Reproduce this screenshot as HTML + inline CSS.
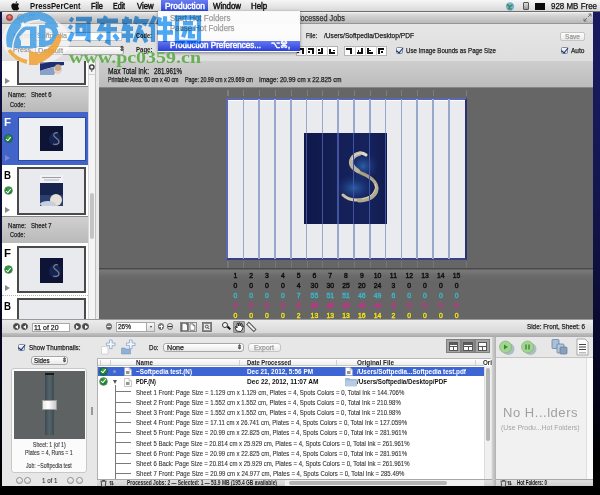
<!DOCTYPE html><html><head><meta charset="utf-8">
<style>
*{margin:0;padding:0;box-sizing:border-box}
html,body{width:600px;height:495px;overflow:hidden;background:#000;font-family:"Liberation Sans",sans-serif;color:#000}
.a{position:absolute}
.t{position:absolute;white-space:nowrap;line-height:1;transform-origin:0 50%;-webkit-text-stroke:0.25px currentColor}
.b{font-weight:bold;-webkit-text-stroke:0}
.m{-webkit-text-stroke:0.45px currentColor}
#desk{left:0;top:0;width:600px;height:486px;background:linear-gradient(#191b5e 0,#16185a 120px,#121448 220px,#0a0a30 320px,#04041a 400px,#000 460px)}
#menubar{left:0;top:0;width:600px;height:12px;background:linear-gradient(#f6f6f6,#d9d9d9);border-bottom:1px solid #6e6e6e}
#win{left:2px;top:12px;width:591px;height:474px;background:#e4e4e4}
.chk{position:absolute;width:7px;height:7px;border:1px solid #7a8aa0;border-radius:1.5px;background:linear-gradient(#fafcff,#c4d4e6)}
.chk::after{content:"";position:absolute;left:1.3px;top:-2px;width:2.5px;height:5.5px;border-right:1.6px solid #1a2c66;border-bottom:1.6px solid #1a2c66;transform:rotate(38deg)}
.btnw{position:absolute;background:linear-gradient(#fff,#eaeaea);border:1px solid #a8a8a8;border-radius:2px}
.gc{position:absolute;width:7px;height:7px;border-radius:50%;background:radial-gradient(circle at 50% 35%,#3aa848,#0a5e1a);box-shadow:0 0 0 .5px #084a14}
.gc::after{content:"";position:absolute;left:2.2px;top:0.8px;width:2px;height:3.6px;border-right:1.3px solid #fff;border-bottom:1.3px solid #fff;transform:rotate(40deg)}
.tri{position:absolute;width:0;height:0;border-left:5px solid #8a8a8a;border-top:3px solid transparent;border-bottom:3px solid transparent}
.frm{position:absolute;border:2px solid #4a4a4a;background:#e8eaee}
.hdr{position:absolute;background:linear-gradient(#d0d0d0,#b9b9b9);border-top:1px solid #8a8a8a}
.circ{position:absolute;width:8px;height:8px;border-radius:50%;border:1px solid #8a8a8a;background:linear-gradient(#fafafa,#d0d0d0)}
.row{position:absolute;left:97px;width:387px;height:10px}
</style></head><body>
<div class="a" id="desk"></div>
<div class="a" style="left:0;top:486px;width:600px;height:9px;background:#000"></div>
<div class="a" style="left:0;top:12px;width:2px;height:474px;background:linear-gradient(#101244,#0c0e38 40%,#06061e 70%,#000)"></div>

<!-- ============ WINDOW ============ -->
<div class="a" id="win"></div>
<!-- title bar -->
<div class="a" style="left:2px;top:11.5px;width:591px;height:12.5px;background:linear-gradient(#e4e4e4,#d2d2d2 30%,#b9b9b9);border-bottom:1px solid #959595;border-top:1px solid #f0f0f0;border-radius:3px 3px 0 0"></div>
<div class="a" style="left:6px;top:14px;width:7px;height:7px;border-radius:50%;background:radial-gradient(circle at 50% 35%,#f08a8a,#c02020);border:1px solid #8a3030"></div>
<div class="a" style="left:17px;top:14px;width:7px;height:7px;border-radius:50%;background:linear-gradient(#d8d8d8,#9a9a9a);border:1px solid #888"></div>
<div class="a" style="left:28px;top:14px;width:7px;height:7px;border-radius:50%;background:linear-gradient(#d8d8d8,#9a9a9a);border:1px solid #888"></div>
<span class="t" style="left: 298px; top: 14px; font-size: 8.5px; color: rgb(51, 51, 51); --w: 47; transform: scaleX(0.8575);">rocessed Jobs</span>
<svg class="a" style="left:583px;top:13px" width="9" height="9" viewBox="0 0 9 9"><path d="M1 8 L4 5 M5 4 L8 1 M5.5 1 H8 V3.5 M1 5.5 V8 H3.5" fill="none" stroke="#6a6a6a" stroke-width=".9"></path></svg>

<!-- toolbar -->
<div class="a" style="left:2px;top:24px;width:591px;height:38px;background:linear-gradient(#e6e6e6,#dedede);border-bottom:1px solid #8e8e8e"></div>
<span class="t" style="left: 13px; top: 32px; font-size: 7.5px; color: rgb(51, 51, 51); --w: 20; transform: scaleX(0.9052);">Name:</span>
<div class="a" style="left:35px;top:31.5px;width:87px;height:9px;background:#fff;border:1px solid #c4c4c4"></div>
<span class="t" style="left: 37px; top: 32px; font-size: 7.5px; color: rgb(68, 68, 68); --w: 30; transform: scaleX(0.9463);">Softpedia</span>
<span class="t b" style="left: 135.5px; top: 32px; font-size: 7.5px; color: rgb(34, 34, 34); --w: 16; transform: scaleX(0.7529);">Code:</span>
<span class="t" style="left: 13px; top: 46px; font-size: 7.5px; color: rgb(51, 51, 51); --w: 20; transform: scaleX(0.9405);">Press:</span>
<div class="btnw" style="left:35px;top:46px;width:89px;height:9px"></div>
<span class="t" style="left: 38px; top: 46.5px; font-size: 7.5px; color: rgb(51, 51, 51); --w: 25; letter-spacing: 0.206px;">Default</span>
<span class="t" style="left:119px;top:46px;font-size:6.5px;color:#333">⇕</span>
<span class="t b" style="left: 136px; top: 46px; font-size: 7.5px; color: rgb(34, 34, 34); --w: 16.5; transform: scaleX(0.8073);">Page:</span>
<span class="t" style="left: 305.5px; top: 32px; font-size: 7.5px; color: rgb(34, 34, 34); --w: 11; transform: scaleX(0.7762);">File:</span>
<span class="t" style="left: 323.5px; top: 32px; font-size: 7.5px; color: rgb(34, 34, 34); --w: 90; transform: scaleX(0.8811);">/Users/Softpedia/Desktop/PDF</span>
<div class="a" style="left:295.5px;top:45.5px;width:42px;height:10px;background:#fff;border:1px solid #b4b4b4"></div>
<div class="a" style="left:344px;top:45.5px;width:42.6px;height:10px;background:#fff;border:1px solid #b4b4b4"></div>
<div class="a" style="left:306px;top:45.5px;width:1px;height:10px;background:#c8c8c8"></div>
<div class="a" style="left:316.3px;top:45.5px;width:1px;height:10px;background:#c8c8c8"></div>
<div class="a" style="left:326.5px;top:45.5px;width:1px;height:10px;background:#c8c8c8"></div>
<div class="a" style="left:354.7px;top:45.5px;width:1px;height:10px;background:#c8c8c8"></div>
<div class="a" style="left:365px;top:45.5px;width:1px;height:10px;background:#c8c8c8"></div>
<div class="a" style="left:375.5px;top:45.5px;width:1px;height:10px;background:#c8c8c8"></div>
<div class="a" style="left:297.5px;top:48.0px;width:6px;height:2px;background:#111"></div>
<div class="a" style="left:301.5px;top:48.0px;width:2px;height:6px;background:#111"></div>
<div class="a" style="left:297.0px;top:50.5px;width:2px;height:2px;background:#111"></div>
<div class="a" style="left:308.0px;top:48.0px;width:6px;height:2px;background:#111"></div>
<div class="a" style="left:312.0px;top:48.0px;width:2px;height:6px;background:#111"></div>
<div class="a" style="left:307.5px;top:50.5px;width:2px;height:2px;background:#111"></div>
<div class="a" style="left:321.3px;top:48.0px;width:2px;height:6px;background:#111"></div>
<div class="a" style="left:317.8px;top:52.0px;width:5.5px;height:2px;background:#111"></div>
<div class="a" style="left:317.8px;top:48.5px;width:2px;height:2px;background:#111"></div>
<div class="a" style="left:328.5px;top:48.5px;width:2px;height:5.5px;background:#111"></div>
<div class="a" style="left:328.5px;top:52.0px;width:6px;height:2px;background:#111"></div>
<div class="a" style="left:332.5px;top:49.5px;width:2px;height:1.5px;background:#111"></div>
<div class="a" style="left:346.0px;top:48.0px;width:6px;height:2px;background:#111"></div>
<div class="a" style="left:350.0px;top:48.0px;width:2px;height:6px;background:#111"></div>
<div class="a" style="left:360.7px;top:48.0px;width:2px;height:6px;background:#111"></div>
<div class="a" style="left:356.7px;top:52.0px;width:6px;height:2px;background:#111"></div>
<div class="a" style="left:357.7px;top:49.5px;width:1.5px;height:2px;background:#111"></div>
<div class="a" style="left:367.0px;top:48.0px;width:2px;height:6px;background:#111"></div>
<div class="a" style="left:367.0px;top:52.0px;width:6px;height:2px;background:#111"></div>
<div class="a" style="left:367.0px;top:49.7px;width:4px;height:1.5px;background:#111"></div>
<div class="a" style="left:377.5px;top:48.0px;width:6px;height:2px;background:#111"></div>
<div class="a" style="left:377.5px;top:48.0px;width:2px;height:6px;background:#111"></div>
<div class="a" style="left:381.0px;top:51.0px;width:2px;height:2px;background:#111"></div>
<div class="chk" style="left:395.5px;top:46.5px"></div>
<span class="t" style="left: 405.5px; top: 46.5px; font-size: 7.5px; color: rgb(34, 34, 34); --w: 90; transform: scaleX(0.8176);">Use Image Bounds as Page Size</span>
<div class="btnw" style="left:560px;top:32px;width:25px;height:9px;border-color:#c4c4c4"></div>
<span class="t" style="left: 565px; top: 32.5px; font-size: 7.5px; color: rgb(153, 153, 153); --w: 15; transform: scaleX(0.8767);">Save</span>
<div class="chk" style="left:561px;top:47px"></div>
<span class="t" style="left: 571px; top: 47px; font-size: 7.5px; color: rgb(34, 34, 34); --w: 13.5; transform: scaleX(0.8745);">Auto</span>

<!-- sidebar -->
<div class="a" style="left:2px;top:61px;width:86px;height:258px;background:#fff"></div>
<div class="a" style="left:88px;top:61px;width:8px;height:258px;background:#f4f4f4;border-left:1px solid #d8d8d8;border-right:1px solid #c0c0c0"></div>
<div class="a" style="left:96px;top:61px;width:3px;height:258px;background:#e9e9e9"></div>
<div class="a" style="left:90px;top:193px;width:4px;height:46px;border-radius:2px;background:#c4c4c4"></div>
<svg class="a" style="left:88px;top:62px" width="8" height="13" viewBox="0 0 8 13"><circle cx="3.8" cy="5" r="2.2" fill="none" stroke="#333" stroke-width="1.3"></circle><path d="M2.8 8.5 H4.8 L3.8 10 Z" fill="#222"></path><rect x="0" y="12" width="8" height=".8" fill="#c8c8c8"></rect></svg>
<!-- first partial frame -->
<div class="frm" style="left:17px;top:61px;width:69px;height:24px;border-top:none"></div>
<svg class="a" style="left:40px;top:62px" width="24" height="13" viewBox="0 0 24 13"><rect width="24" height="13" fill="#e8ecf2"></rect><path d="M0 0 H24 V3 C16 4 8 6 0 9 Z" fill="#1e3070"></path><path d="M0 9 C8 6 14 5 18 5 L14 13 H0Z" fill="#8aa0c8"></path><ellipse cx="18" cy="7.5" rx="4" ry="5" fill="#e4d4c0"></ellipse><ellipse cx="18" cy="6" rx="3.2" ry="3" fill="#c8a888"></ellipse></svg>
<div class="tri" style="left:5px;top:78px"></div>
<!-- header sheet 6 -->
<div class="hdr" style="left:2px;top:86px;width:86px;height:26px"></div>
<span class="t" style="left: 8px; top: 91px; font-size: 8px; color: rgb(34, 34, 34); --w: 18; transform: scaleX(0.7639);">Name:</span>
<span class="t" style="left: 31px; top: 91px; font-size: 8px; color: rgb(34, 34, 34); --w: 20.5; transform: scaleX(0.7433);">Sheet 6</span>
<span class="t" style="left: 10px; top: 100.5px; font-size: 8px; color: rgb(34, 34, 34); --w: 15; transform: scaleX(0.7023);">Code:</span>
<!-- selected F row -->
<div class="a" style="left:2px;top:112px;width:86px;height:53px;background:#4264c8"></div>
<span class="t b" style="left: 4px; top: 118px; font-size: 10px; color: rgb(255, 255, 255); --w: 7; transform: scaleX(1.1458);">F</span>
<div class="gc" style="left:4.5px;top:135px"></div>
<div class="tri" style="left:5px;top:155px;border-left-color:#7a8ad0"></div>
<div class="frm" style="left:18px;top:116.5px;width:68px;height:44.5px;border-color:#2c48a8;border-width:1px;background:#eeeff3"></div>
<svg class="a" style="left:40px;top:126px" width="23" height="25" viewBox="0 0 23 25"><rect width="23" height="25" fill="#0e1436"></rect><ellipse cx="15" cy="13" rx="6" ry="7" fill="#22408a" opacity=".35"></ellipse><path d="M18 7 C15 6 13 8 14 10 C15 12 19 13 19 16 C19 18 16 19 13 18" fill="none" stroke="#9a9a98" stroke-width="1.2" opacity=".8"></path></svg>
<!-- B row -->
<span class="t b" style="left: 4px; top: 171px; font-size: 10px; color: rgb(0, 0, 0); --w: 7; transform: scaleX(0.9676);">B</span>
<div class="gc" style="left:4.5px;top:187px"></div>
<div class="tri" style="left:5px;top:207px"></div>
<div class="frm" style="left:17px;top:167px;width:69px;height:48px"></div>
<svg class="a" style="left:40px;top:175px" width="23" height="31" viewBox="0 0 23 31"><rect width="23" height="31" fill="#f2f2f4"></rect><rect x="2" y="2" width="19" height="1" fill="#9a9aa8"></rect><rect x="4" y="4.5" width="15" height="1" fill="#b4b4c0"></rect><rect y="8" width="23" height="23" fill="#18244e"></rect><rect y="20" width="23" height="11" fill="#2c4070"></rect><ellipse cx="16" cy="25" rx="6" ry="6" fill="#e8e0d8"></ellipse><ellipse cx="8" cy="29" rx="8" ry="3" fill="#c8d0e0"></ellipse></svg>
<!-- header sheet 7 -->
<div class="hdr" style="left:2px;top:216px;width:86px;height:27px"></div>
<span class="t" style="left: 8px; top: 221.5px; font-size: 8px; color: rgb(34, 34, 34); --w: 18; transform: scaleX(0.7639);">Name:</span>
<span class="t" style="left: 31px; top: 221.5px; font-size: 8px; color: rgb(34, 34, 34); --w: 20.5; transform: scaleX(0.7433);">Sheet 7</span>
<span class="t" style="left: 10px; top: 230.5px; font-size: 8px; color: rgb(34, 34, 34); --w: 15; transform: scaleX(0.7023);">Code:</span>
<!-- F row 2 -->
<span class="t b" style="left: 4px; top: 249px; font-size: 10px; color: rgb(0, 0, 0); --w: 7; transform: scaleX(1.1458);">F</span>
<div class="gc" style="left:4.5px;top:266px"></div>
<div class="tri" style="left:5px;top:285px"></div>
<div class="frm" style="left:17px;top:246px;width:69px;height:47px"></div>
<svg class="a" style="left:40px;top:258px" width="23" height="25" viewBox="0 0 23 25"><rect width="23" height="25" fill="#0e1436"></rect><ellipse cx="15" cy="13" rx="6" ry="7" fill="#22408a" opacity=".35"></ellipse><path d="M18 7 C15 6 13 8 14 10 C15 12 19 13 19 16 C19 18 16 19 13 18" fill="none" stroke="#9a9a98" stroke-width="1.2" opacity=".8"></path></svg>
<div class="a" style="left:2px;top:294.5px;width:86px;height:2px;border-top:1.5px dotted #b4b4b4"></div>
<!-- B row 2 -->
<span class="t b" style="left: 4px; top: 302px; font-size: 10px; color: rgb(0, 0, 0); --w: 7; transform: scaleX(0.9676);">B</span>
<div class="frm" style="left:17px;top:298px;width:69px;height:30px"></div>

<!-- preview info strip -->
<div class="a" style="left:99px;top:61px;width:494px;height:27px;background:linear-gradient(#cecece,#bcbcbc);border-bottom:1px solid #858585"></div>
<span class="t" style="left: 108px; top: 67px; font-size: 8.5px; color: rgb(17, 17, 17); --w: 41; transform: scaleX(0.784);">Max Total Ink:</span>
<span class="t" style="left: 154px; top: 67px; font-size: 8.5px; color: rgb(17, 17, 17); --w: 28; transform: scaleX(0.7311);">281.961%</span>
<span class="t" style="left: 108px; top: 77px; font-size: 6.5px; color: rgb(34, 34, 34); --w: 70.5; transform: scaleX(0.813);">Printable Area: 60 cm x 40 cm</span>
<span class="t" style="left: 185px; top: 77px; font-size: 6.5px; color: rgb(34, 34, 34); --w: 68; transform: scaleX(0.8218);">Page: 20.99 cm x 29.669 cm</span>
<span class="t" style="left: 259px; top: 77px; font-size: 6.5px; color: rgb(34, 34, 34); --w: 82.5; transform: scaleX(0.9633);">Image: 20.99 cm x 22.825 cm</span>

<!-- canvas -->
<div class="a" style="left:99px;top:88px;width:494px;height:181px;background:#666"></div>
<div class="a" style="left:99px;top:268px;width:494px;height:51px;background:linear-gradient(#4a4a4a 0,#4a4a4a 1px,#7a7a7a 2px,#6a6a6a 8px,#666 14px)"></div>
<div class="a" style="left:226.5px;top:90px;width:1px;height:6px;background:#7e7e7e"></div>
<div class="a" style="left:226.5px;top:261px;width:1px;height:7px;background:#767676"></div>
<div class="a" style="left:227.6px;top:90px;width:1px;height:6px;background:#7e7e7e"></div>
<div class="a" style="left:227.6px;top:261px;width:1px;height:7px;background:#767676"></div>
<div class="a" style="left:243.4px;top:90px;width:1px;height:6px;background:#7e7e7e"></div>
<div class="a" style="left:243.4px;top:261px;width:1px;height:7px;background:#767676"></div>
<div class="a" style="left:259.2px;top:90px;width:1px;height:6px;background:#7e7e7e"></div>
<div class="a" style="left:259.2px;top:261px;width:1px;height:7px;background:#767676"></div>
<div class="a" style="left:275.0px;top:90px;width:1px;height:6px;background:#7e7e7e"></div>
<div class="a" style="left:275.0px;top:261px;width:1px;height:7px;background:#767676"></div>
<div class="a" style="left:290.8px;top:90px;width:1px;height:6px;background:#7e7e7e"></div>
<div class="a" style="left:290.8px;top:261px;width:1px;height:7px;background:#767676"></div>
<div class="a" style="left:306.6px;top:90px;width:1px;height:6px;background:#7e7e7e"></div>
<div class="a" style="left:306.6px;top:261px;width:1px;height:7px;background:#767676"></div>
<div class="a" style="left:322.4px;top:90px;width:1px;height:6px;background:#7e7e7e"></div>
<div class="a" style="left:322.4px;top:261px;width:1px;height:7px;background:#767676"></div>
<div class="a" style="left:338.2px;top:90px;width:1px;height:6px;background:#7e7e7e"></div>
<div class="a" style="left:338.2px;top:261px;width:1px;height:7px;background:#767676"></div>
<div class="a" style="left:354.0px;top:90px;width:1px;height:6px;background:#7e7e7e"></div>
<div class="a" style="left:354.0px;top:261px;width:1px;height:7px;background:#767676"></div>
<div class="a" style="left:369.8px;top:90px;width:1px;height:6px;background:#7e7e7e"></div>
<div class="a" style="left:369.8px;top:261px;width:1px;height:7px;background:#767676"></div>
<div class="a" style="left:385.6px;top:90px;width:1px;height:6px;background:#7e7e7e"></div>
<div class="a" style="left:385.6px;top:261px;width:1px;height:7px;background:#767676"></div>
<div class="a" style="left:401.4px;top:90px;width:1px;height:6px;background:#7e7e7e"></div>
<div class="a" style="left:401.4px;top:261px;width:1px;height:7px;background:#767676"></div>
<div class="a" style="left:417.20000000000005px;top:90px;width:1px;height:6px;background:#7e7e7e"></div>
<div class="a" style="left:417.20000000000005px;top:261px;width:1px;height:7px;background:#767676"></div>
<div class="a" style="left:433.0px;top:90px;width:1px;height:6px;background:#7e7e7e"></div>
<div class="a" style="left:433.0px;top:261px;width:1px;height:7px;background:#767676"></div>
<div class="a" style="left:465.5px;top:90px;width:1px;height:6px;background:#7e7e7e"></div>
<div class="a" style="left:465.5px;top:261px;width:1px;height:7px;background:#767676"></div>
<div class="a" style="left:225.8px;top:97.8px;width:241.2px;height:162px;background:#eaebef;border:2px solid #5868b4;border-right-color:#2a3070;border-bottom-color:#3a4088"></div>
<div class="a" style="left:227.8px;top:99.8px;width:237px;height:1.5px;background:#fff"></div>
<div class="a" style="left:242.5px;top:99px;width:1.8px;height:160px;background:#98a8cc"></div>
<div class="a" style="left:258.3px;top:99px;width:1.8px;height:160px;background:#98a8cc"></div>
<div class="a" style="left:274.1px;top:99px;width:1.8px;height:160px;background:#98a8cc"></div>
<div class="a" style="left:289.90000000000003px;top:99px;width:1.8px;height:160px;background:#98a8cc"></div>
<div class="a" style="left:305.70000000000005px;top:99px;width:1.8px;height:160px;background:#98a8cc"></div>
<div class="a" style="left:321.5px;top:99px;width:1.8px;height:160px;background:#98a8cc"></div>
<div class="a" style="left:337.30000000000007px;top:99px;width:1.8px;height:160px;background:#98a8cc"></div>
<div class="a" style="left:353.1px;top:99px;width:1.8px;height:160px;background:#98a8cc"></div>
<div class="a" style="left:368.90000000000003px;top:99px;width:1.8px;height:160px;background:#98a8cc"></div>
<div class="a" style="left:384.70000000000005px;top:99px;width:1.8px;height:160px;background:#98a8cc"></div>
<div class="a" style="left:400.5px;top:99px;width:1.8px;height:160px;background:#98a8cc"></div>
<div class="a" style="left:416.30000000000007px;top:99px;width:1.8px;height:160px;background:#98a8cc"></div>
<div class="a" style="left:432.1px;top:99px;width:1.8px;height:160px;background:#98a8cc"></div>
<div class="a" style="left:447.90000000000003px;top:99px;width:1.8px;height:160px;background:#98a8cc"></div>
<div class="a" style="left:304px;top:133px;width:83px;height:91px;background:linear-gradient(90deg,#0f1848,#142058 50%,#15225c 75%,#121c50)"></div>
<svg class="a" style="left:304px;top:133px" width="83" height="91" viewBox="0 0 83 91">
<defs>
<radialGradient id="g1" cx="0.5" cy="0.5" r="0.5"><stop offset="0" stop-color="#3a88d8" stop-opacity=".6"></stop><stop offset="1" stop-color="#1a3a90" stop-opacity="0"></stop></radialGradient>
<linearGradient id="met" x1="0" y1="0" x2="0" y2="1"><stop offset="0" stop-color="#e0dcd0"></stop><stop offset=".45" stop-color="#a49c84"></stop><stop offset="1" stop-color="#d0c8b0"></stop></linearGradient>
</defs>
<ellipse cx="59" cy="33" rx="16" ry="15" fill="url(#g1)"></ellipse>
<ellipse cx="50" cy="55" rx="20" ry="14" fill="url(#g1)"></ellipse>
<path d="M62 22 C57 18 50 20 47 27 C45 33 50 37 57 40 C65 43 72 47 73 55 C73 62 66 66 56 67 C49 67.5 43 66 39 62" fill="none" stroke="#4a4030" stroke-width="3.6" stroke-linecap="round" opacity=".6"></path>
<path d="M62 22 C57 18 50 20 47 27 C45 33 50 37 57 40 C65 43 72 47 73 55 C73 62 66 66 56 67 C49 67.5 43 66 39 62" fill="none" stroke="url(#met)" stroke-width="3" stroke-linecap="round"></path>
<path d="M56 20.5 C50 22 47 25 47.5 30 C48 34 51 36 54 38" fill="none" stroke="#bab4a0" stroke-width="4.2" stroke-linecap="round"></path><path d="M58 20 C52 20 49 23 48 27" fill="none" stroke="#eee8d8" stroke-width="1"></path><path d="M72 58 C70 64 64 67 55 67.5" fill="none" stroke="#b0a890" stroke-width="4" stroke-linecap="round"></path>
<path d="M71 51 C73 58 68 64 58 66" fill="none" stroke="#e0d8b8" stroke-width=".9"></path>
</svg>
<div class="a" style="left:305.8px;top:133px;width:1.2px;height:91px;background:#4254a0"></div>
<div class="a" style="left:321.59999999999997px;top:133px;width:1.2px;height:91px;background:#4254a0"></div>
<div class="a" style="left:337.40000000000003px;top:133px;width:1.2px;height:91px;background:#4254a0"></div>
<div class="a" style="left:353.2px;top:133px;width:1.2px;height:91px;background:#4254a0"></div>
<div class="a" style="left:369.0px;top:133px;width:1.2px;height:91px;background:#4254a0"></div>
<div class="a" style="left:384.8px;top:133px;width:1.2px;height:91px;background:#4254a0"></div>
<span class="t m" style="left:225.4px;width:20px;text-align:center;top:273.2px;font-size:6.8px;color:#111;text-shadow:none">1</span>
<span class="t m" style="left:241.20000000000002px;width:20px;text-align:center;top:273.2px;font-size:6.8px;color:#111;text-shadow:none">2</span>
<span class="t m" style="left:257.0px;width:20px;text-align:center;top:273.2px;font-size:6.8px;color:#111;text-shadow:none">3</span>
<span class="t m" style="left:272.8px;width:20px;text-align:center;top:273.2px;font-size:6.8px;color:#111;text-shadow:none">4</span>
<span class="t m" style="left:288.6px;width:20px;text-align:center;top:273.2px;font-size:6.8px;color:#111;text-shadow:none">5</span>
<span class="t m" style="left:304.4px;width:20px;text-align:center;top:273.2px;font-size:6.8px;color:#111;text-shadow:none">6</span>
<span class="t m" style="left:320.20000000000005px;width:20px;text-align:center;top:273.2px;font-size:6.8px;color:#111;text-shadow:none">7</span>
<span class="t m" style="left:336.0px;width:20px;text-align:center;top:273.2px;font-size:6.8px;color:#111;text-shadow:none">8</span>
<span class="t m" style="left:351.8px;width:20px;text-align:center;top:273.2px;font-size:6.8px;color:#111;text-shadow:none">9</span>
<span class="t m" style="left:367.6px;width:20px;text-align:center;top:273.2px;font-size:6.8px;color:#111;text-shadow:none">10</span>
<span class="t m" style="left:383.4px;width:20px;text-align:center;top:273.2px;font-size:6.8px;color:#111;text-shadow:none">11</span>
<span class="t m" style="left:399.20000000000005px;width:20px;text-align:center;top:273.2px;font-size:6.8px;color:#111;text-shadow:none">12</span>
<span class="t m" style="left:415.0px;width:20px;text-align:center;top:273.2px;font-size:6.8px;color:#111;text-shadow:none">13</span>
<span class="t m" style="left:430.8px;width:20px;text-align:center;top:273.2px;font-size:6.8px;color:#111;text-shadow:none">14</span>
<span class="t m" style="left:446.6px;width:20px;text-align:center;top:273.2px;font-size:6.8px;color:#111;text-shadow:none">15</span>
<span class="t m" style="left:225.4px;width:20px;text-align:center;top:282.5px;font-size:6.8px;color:#111;text-shadow:none">0</span>
<span class="t m" style="left:241.20000000000002px;width:20px;text-align:center;top:282.5px;font-size:6.8px;color:#111;text-shadow:none">0</span>
<span class="t m" style="left:257.0px;width:20px;text-align:center;top:282.5px;font-size:6.8px;color:#111;text-shadow:none">0</span>
<span class="t m" style="left:272.8px;width:20px;text-align:center;top:282.5px;font-size:6.8px;color:#111;text-shadow:none">0</span>
<span class="t m" style="left:288.6px;width:20px;text-align:center;top:282.5px;font-size:6.8px;color:#111;text-shadow:none">4</span>
<span class="t m" style="left:304.4px;width:20px;text-align:center;top:282.5px;font-size:6.8px;color:#111;text-shadow:none">30</span>
<span class="t m" style="left:320.20000000000005px;width:20px;text-align:center;top:282.5px;font-size:6.8px;color:#111;text-shadow:none">30</span>
<span class="t m" style="left:336.0px;width:20px;text-align:center;top:282.5px;font-size:6.8px;color:#111;text-shadow:none">25</span>
<span class="t m" style="left:351.8px;width:20px;text-align:center;top:282.5px;font-size:6.8px;color:#111;text-shadow:none">20</span>
<span class="t m" style="left:367.6px;width:20px;text-align:center;top:282.5px;font-size:6.8px;color:#111;text-shadow:none">24</span>
<span class="t m" style="left:383.4px;width:20px;text-align:center;top:282.5px;font-size:6.8px;color:#111;text-shadow:none">3</span>
<span class="t m" style="left:399.20000000000005px;width:20px;text-align:center;top:282.5px;font-size:6.8px;color:#111;text-shadow:none">0</span>
<span class="t m" style="left:415.0px;width:20px;text-align:center;top:282.5px;font-size:6.8px;color:#111;text-shadow:none">0</span>
<span class="t m" style="left:430.8px;width:20px;text-align:center;top:282.5px;font-size:6.8px;color:#111;text-shadow:none">0</span>
<span class="t m" style="left:446.6px;width:20px;text-align:center;top:282.5px;font-size:6.8px;color:#111;text-shadow:none">0</span>
<span class="t m" style="left:225.4px;width:20px;text-align:center;top:293.0px;font-size:6.8px;color:#3ab4c8;text-shadow:none">0</span>
<span class="t m" style="left:241.20000000000002px;width:20px;text-align:center;top:293.0px;font-size:6.8px;color:#3ab4c8;text-shadow:none">0</span>
<span class="t m" style="left:257.0px;width:20px;text-align:center;top:293.0px;font-size:6.8px;color:#3ab4c8;text-shadow:none">0</span>
<span class="t m" style="left:272.8px;width:20px;text-align:center;top:293.0px;font-size:6.8px;color:#3ab4c8;text-shadow:none">0</span>
<span class="t m" style="left:288.6px;width:20px;text-align:center;top:293.0px;font-size:6.8px;color:#3ab4c8;text-shadow:none">7</span>
<span class="t m" style="left:304.4px;width:20px;text-align:center;top:293.0px;font-size:6.8px;color:#3ab4c8;text-shadow:none">55</span>
<span class="t m" style="left:320.20000000000005px;width:20px;text-align:center;top:293.0px;font-size:6.8px;color:#3ab4c8;text-shadow:none">51</span>
<span class="t m" style="left:336.0px;width:20px;text-align:center;top:293.0px;font-size:6.8px;color:#3ab4c8;text-shadow:none">51</span>
<span class="t m" style="left:351.8px;width:20px;text-align:center;top:293.0px;font-size:6.8px;color:#3ab4c8;text-shadow:none">46</span>
<span class="t m" style="left:367.6px;width:20px;text-align:center;top:293.0px;font-size:6.8px;color:#3ab4c8;text-shadow:none">49</span>
<span class="t m" style="left:383.4px;width:20px;text-align:center;top:293.0px;font-size:6.8px;color:#3ab4c8;text-shadow:none">6</span>
<span class="t m" style="left:399.20000000000005px;width:20px;text-align:center;top:293.0px;font-size:6.8px;color:#3ab4c8;text-shadow:none">0</span>
<span class="t m" style="left:415.0px;width:20px;text-align:center;top:293.0px;font-size:6.8px;color:#3ab4c8;text-shadow:none">0</span>
<span class="t m" style="left:430.8px;width:20px;text-align:center;top:293.0px;font-size:6.8px;color:#3ab4c8;text-shadow:none">0</span>
<span class="t m" style="left:446.6px;width:20px;text-align:center;top:293.0px;font-size:6.8px;color:#3ab4c8;text-shadow:none">0</span>
<span class="t m" style="left:225.4px;width:20px;text-align:center;top:302.5px;font-size:6.8px;color:#c8308c;text-shadow:none">0</span>
<span class="t m" style="left:241.20000000000002px;width:20px;text-align:center;top:302.5px;font-size:6.8px;color:#c8308c;text-shadow:none">0</span>
<span class="t m" style="left:257.0px;width:20px;text-align:center;top:302.5px;font-size:6.8px;color:#c8308c;text-shadow:none">0</span>
<span class="t m" style="left:272.8px;width:20px;text-align:center;top:302.5px;font-size:6.8px;color:#c8308c;text-shadow:none">0</span>
<span class="t m" style="left:288.6px;width:20px;text-align:center;top:302.5px;font-size:6.8px;color:#c8308c;text-shadow:none">6</span>
<span class="t m" style="left:304.4px;width:20px;text-align:center;top:302.5px;font-size:6.8px;color:#c8308c;text-shadow:none">46</span>
<span class="t m" style="left:320.20000000000005px;width:20px;text-align:center;top:302.5px;font-size:6.8px;color:#c8308c;text-shadow:none">46</span>
<span class="t m" style="left:336.0px;width:20px;text-align:center;top:302.5px;font-size:6.8px;color:#c8308c;text-shadow:none">45</span>
<span class="t m" style="left:351.8px;width:20px;text-align:center;top:302.5px;font-size:6.8px;color:#c8308c;text-shadow:none">46</span>
<span class="t m" style="left:367.6px;width:20px;text-align:center;top:302.5px;font-size:6.8px;color:#c8308c;text-shadow:none">44</span>
<span class="t m" style="left:383.4px;width:20px;text-align:center;top:302.5px;font-size:6.8px;color:#c8308c;text-shadow:none">6</span>
<span class="t m" style="left:399.20000000000005px;width:20px;text-align:center;top:302.5px;font-size:6.8px;color:#c8308c;text-shadow:none">0</span>
<span class="t m" style="left:415.0px;width:20px;text-align:center;top:302.5px;font-size:6.8px;color:#c8308c;text-shadow:none">0</span>
<span class="t m" style="left:430.8px;width:20px;text-align:center;top:302.5px;font-size:6.8px;color:#c8308c;text-shadow:none">0</span>
<span class="t m" style="left:446.6px;width:20px;text-align:center;top:302.5px;font-size:6.8px;color:#c8308c;text-shadow:none">0</span>
<span class="t m" style="left:225.4px;width:20px;text-align:center;top:312.5px;font-size:6.8px;color:#f0e020;text-shadow:0 0 1px #333">0</span>
<span class="t m" style="left:241.20000000000002px;width:20px;text-align:center;top:312.5px;font-size:6.8px;color:#f0e020;text-shadow:0 0 1px #333">0</span>
<span class="t m" style="left:257.0px;width:20px;text-align:center;top:312.5px;font-size:6.8px;color:#f0e020;text-shadow:0 0 1px #333">0</span>
<span class="t m" style="left:272.8px;width:20px;text-align:center;top:312.5px;font-size:6.8px;color:#f0e020;text-shadow:0 0 1px #333">0</span>
<span class="t m" style="left:288.6px;width:20px;text-align:center;top:312.5px;font-size:6.8px;color:#f0e020;text-shadow:0 0 1px #333">2</span>
<span class="t m" style="left:304.4px;width:20px;text-align:center;top:312.5px;font-size:6.8px;color:#f0e020;text-shadow:0 0 1px #333">13</span>
<span class="t m" style="left:320.20000000000005px;width:20px;text-align:center;top:312.5px;font-size:6.8px;color:#f0e020;text-shadow:0 0 1px #333">13</span>
<span class="t m" style="left:336.0px;width:20px;text-align:center;top:312.5px;font-size:6.8px;color:#f0e020;text-shadow:0 0 1px #333">13</span>
<span class="t m" style="left:351.8px;width:20px;text-align:center;top:312.5px;font-size:6.8px;color:#f0e020;text-shadow:0 0 1px #333">16</span>
<span class="t m" style="left:367.6px;width:20px;text-align:center;top:312.5px;font-size:6.8px;color:#f0e020;text-shadow:0 0 1px #333">14</span>
<span class="t m" style="left:383.4px;width:20px;text-align:center;top:312.5px;font-size:6.8px;color:#f0e020;text-shadow:0 0 1px #333">2</span>
<span class="t m" style="left:399.20000000000005px;width:20px;text-align:center;top:312.5px;font-size:6.8px;color:#f0e020;text-shadow:0 0 1px #333">0</span>
<span class="t m" style="left:415.0px;width:20px;text-align:center;top:312.5px;font-size:6.8px;color:#f0e020;text-shadow:0 0 1px #333">0</span>
<span class="t m" style="left:430.8px;width:20px;text-align:center;top:312.5px;font-size:6.8px;color:#f0e020;text-shadow:0 0 1px #333">0</span>
<span class="t m" style="left:446.6px;width:20px;text-align:center;top:312.5px;font-size:6.8px;color:#f0e020;text-shadow:0 0 1px #333">0</span>

<!-- nav bar -->
<div class="a" style="left:2px;top:319px;width:591px;height:14px;background:linear-gradient(#ececec,#d8d8d8);border-top:1px solid #9a9a9a"></div>
<div class="a" style="left:12.799999999999999px;top:323.3px;width:6.8px;height:6.8px;border-radius:50%;background:#4a4a4a;border:1px solid #555"></div>
<div class="a" style="left:14.6px;top:324.7px;width:0;height:0;border-right:3px solid #fff;border-top:2px solid transparent;border-bottom:2px solid transparent"></div>
<div class="a" style="left:21.200000000000003px;top:323.3px;width:6.8px;height:6.8px;border-radius:50%;background:#4a4a4a;border:1px solid #555"></div>
<div class="a" style="left:23.0px;top:324.7px;width:0;height:0;border-right:3px solid #fff;border-top:2px solid transparent;border-bottom:2px solid transparent"></div>
<div class="a" style="left:73.89999999999999px;top:323.3px;width:6.8px;height:6.8px;border-radius:50%;background:#4a4a4a;border:1px solid #555"></div>
<div class="a" style="left:76.1px;top:324.7px;width:0;height:0;border-left:3px solid #fff;border-top:2px solid transparent;border-bottom:2px solid transparent"></div>
<div class="a" style="left:82.39999999999999px;top:323.3px;width:6.8px;height:6.8px;border-radius:50%;background:#4a4a4a;border:1px solid #555"></div>
<div class="a" style="left:84.6px;top:324.7px;width:0;height:0;border-left:3px solid #fff;border-top:2px solid transparent;border-bottom:2px solid transparent"></div>
<div class="a" style="left:31.5px;top:322.5px;width:38.5px;height:9px;background:#fff;border:1px solid #a8a8a8"></div>
<span class="t" style="left: 33.5px; top: 323.5px; font-size: 7.5px; color: rgb(34, 34, 34); --w: 24.5; transform: scaleX(0.9224);">11 of 20</span>
<div class="a" style="left:105.95px;top:323.15px;width:6.5px;height:6.5px;border-radius:50%;background:linear-gradient(#8a8a8a,#5a5a5a);border:1px solid #6e6e6e"></div>
<div class="a" style="left:107.2px;top:325.9px;width:4px;height:1px;background:#eee"></div>
<div class="a" style="left:116px;top:321.5px;width:31px;height:10px;background:#fff;border:1px solid #a8a8a8"></div>
<span class="t" style="left: 117.5px; top: 323px; font-size: 7.5px; color: rgb(34, 34, 34); --w: 13; transform: scaleX(0.8658);">26%</span>
<div class="a" style="left:147px;top:321.5px;width:8px;height:10px;background:linear-gradient(#fafafa,#dadada);border:1px solid #a8a8a8;border-left:none"></div>
<div class="a" style="left:149.5px;top:326px;width:0;height:0;border-top:2px solid #333;border-left:1.5px solid transparent;border-right:1.5px solid transparent"></div>
<div class="a" style="left:157.95px;top:323.25px;width:6.5px;height:6.5px;border-radius:50%;background:linear-gradient(#8a8a8a,#5a5a5a);border:1px solid #6e6e6e"></div>
<div class="a" style="left:159.2px;top:326px;width:4px;height:1px;background:#fff"></div><div class="a" style="left:160.7px;top:324.5px;width:1px;height:4px;background:#fff"></div>
<div class="a" style="left:166.55px;top:323.25px;width:6.5px;height:6.5px;border-radius:50%;background:linear-gradient(#f4f4f4,#c8c8c8);border:1px solid #6e6e6e"></div>
<div class="a" style="left:167.8px;top:326px;width:4px;height:1px;background:#333"></div>
<svg class="a" style="left:179.5px;top:321.5px" width="17" height="10" viewBox="0 0 17 10"><rect x="0.5" y="0.5" width="16" height="9" fill="#e8e8e8" stroke="#777" stroke-width=".8"></rect><rect x="0.8" y="0.8" width="8" height="8.4" fill="#6a6a6a"></rect><path d="M2.5 1.8 H5.5 L7 3.3 V8.3 H2.5 Z" fill="#fafafa"></path><path d="M10 1.8 H13 L14.8 3.6 V8.3 H10 Z" fill="#fff" stroke="#555" stroke-width=".7"></path><path d="M13 1.8 V3.6 H14.8" fill="none" stroke="#555" stroke-width=".6"></path></svg>
<svg class="a" style="left:202px;top:321.5px" width="10" height="10" viewBox="0 0 10 10"><rect x="0.5" y="0.5" width="9" height="9" fill="#8a8a8a" stroke="#666" stroke-width=".8"></rect><rect x="2" y="2" width="6" height="6" fill="#ececec"></rect><circle cx="4.8" cy="4.6" r="1.5" fill="none" stroke="#333" stroke-width=".8"></circle><path d="M5.8 5.6 L7.3 7.1" stroke="#333" stroke-width=".9"></path></svg>
<div class="a" style="left:221.5px;top:322px;width:6px;height:6px;border-radius:50%;border:1.2px solid #333;background:#f8f8f8"></div>
<div class="a" style="left:226.5px;top:327.3px;width:4px;height:1.6px;background:#111;transform:rotate(45deg)"></div>
<div class="a" style="left:233px;top:321px;width:11.5px;height:11.5px;background:#a8a8a8;border:1px solid #8a8a8a;border-radius:1px"></div>
<svg class="a" style="left:234px;top:322px" width="10" height="10" viewBox="0 0 10 10"><path d="M2.5 9 L1 5 L2 4.5 L3 6 L3 1.5 L4 1 L4.5 4 L5 0.8 L6 1 L6 4 L7 1.5 L8 2 L7.8 5 L8.7 3.5 L9.5 4 L8 8 L7 9.5 Z" fill="#fff" stroke="#111" stroke-width=".8"></path></svg>
<div class="a" style="left:246px;top:325px;width:11px;height:3.5px;border:1px solid #555;background:#f0f0f0;transform:rotate(45deg)"></div>
<span class="t" style="left: 527px; top: 322.5px; font-size: 7.5px; color: rgb(34, 34, 34); --w: 58; transform: scaleX(0.8431);">Side: Front, Sheet: 6</span>

<!-- splitter -->
<div class="a" style="left:2px;top:333px;width:591px;height:4px;background:linear-gradient(#c2c2c2,#a8a8a8)"></div>

<!-- lower panel -->
<div class="a" style="left:2px;top:337px;width:591px;height:149px;background:#e7e7e7"></div>
<div class="chk" style="left:18px;top:344px"></div>
<span class="t" style="left: 28.5px; top: 343.5px; font-size: 7.5px; color: rgb(34, 34, 34); --w: 51.5; transform: scaleX(0.8365);">Show Thumbnails:</span>
<div class="btnw" style="left:31px;top:356px;width:37px;height:9px;border-radius:3px"></div>
<span class="t" style="left: 34px; top: 356.5px; font-size: 7.5px; color: rgb(34, 34, 34); --w: 15.5; transform: scaleX(0.826);">Sides</span>
<span class="t" style="left:62px;top:357px;font-size:6px;color:#333">⇕</span>
<div class="a" style="left:11px;top:367.5px;width:76px;height:105px;background:#fbfbfb;border:1px solid #c8c8c8;border-radius:3px"></div>
<div class="a" style="left:14px;top:370.5px;width:71px;height:68px;background:#5f6262"></div>
<div class="a" style="left:45px;top:373px;width:8.5px;height:62px;background:linear-gradient(90deg,#3c4a52,#56646a 50%,#3c4a52)"></div>
<div class="a" style="left:45px;top:373px;width:8.5px;height:2px;background:#1a1a1a"></div>
<div class="a" style="left:41.5px;top:400px;width:15px;height:10px;background:linear-gradient(90deg,#e8e8e8,#fff 40%,#c8c8c8);border:1px solid #9a9a9a"></div>
<span class="t" style="left: 33px; top: 441.6px; font-size: 6.5px; color: rgb(51, 51, 51); -webkit-text-stroke: 0.1px rgb(51, 51, 51); --w: 32.7; transform: scaleX(0.7936);">Sheet: 1 (of 1)</span>
<span class="t" style="left: 25.3px; top: 449.6px; font-size: 6.5px; color: rgb(51, 51, 51); -webkit-text-stroke: 0.1px rgb(51, 51, 51); --w: 47.8; transform: scaleX(0.8115);">Plates = 4, Runs = 1</span>
<span class="t" style="left: 26.3px; top: 462.6px; font-size: 6.5px; color: rgb(51, 51, 51); -webkit-text-stroke: 0.1px rgb(51, 51, 51); --w: 45.8; transform: scaleX(0.7946);">Job: ~Softpedia test</span>
<div class="a" style="left:15.5px;top:476.5px;width:7px;height:7px;border-radius:50%;border:1px solid #8a8a8a;background:linear-gradient(#f8f8f8,#d4d4d4)"></div>
<div class="a" style="left:24.2px;top:476.5px;width:7px;height:7px;border-radius:50%;border:1px solid #8a8a8a;background:linear-gradient(#f8f8f8,#d4d4d4)"></div>
<div class="a" style="left:67.2px;top:476.5px;width:7px;height:7px;border-radius:50%;border:1px solid #8a8a8a;background:linear-gradient(#f8f8f8,#d4d4d4)"></div>
<div class="a" style="left:75.5px;top:476.5px;width:7px;height:7px;border-radius:50%;border:1px solid #8a8a8a;background:linear-gradient(#f8f8f8,#d4d4d4)"></div>
<span class="t" style="left: 41.5px; top: 476.5px; font-size: 7.5px; color: rgb(51, 51, 51); -webkit-text-stroke: 0.1px rgb(51, 51, 51); --w: 15.5; transform: scaleX(0.826);">1 of 1</span>
<div class="a" style="left:91px;top:407px;width:2px;height:8px;background:#999"></div>
<svg class="a" style="left:100px;top:339px" width="40" height="16" viewBox="0 0 40 16"><path d="M1.5 7.5 h4.5 l2 2 v5.5 h-6.5z" fill="#fdfdfd" stroke="#c4c4c4" stroke-width=".6"></path><path d="M9.5 1 h2.6 v3 h3 v2.6 h-3 v3 h-2.6 v-3 h-3 v-2.6 h3z" fill="#f2f5fa" stroke="#8aa4cc" stroke-width=".8"></path><path d="M21.5 9 h3.5 l1 1 h4.5 v5 h-9z" fill="#8eb0d4" stroke="#6f90b8" stroke-width=".5"></path><path d="M29.5 1 h2.6 v3 h3 v2.6 h-3 v3 h-2.6 v-3 h-3 v-2.6 h3z" fill="#f2f5fa" stroke="#8aa4cc" stroke-width=".8"></path></svg>
<span class="t" style="left: 149px; top: 343.5px; font-size: 7.5px; color: rgb(34, 34, 34); --w: 9.5; transform: scaleX(0.8139);">Do:</span>
<div class="btnw" style="left:163px;top:343px;width:80.5px;height:9px;border-radius:3px"></div>
<span class="t" style="left: 167px; top: 343.5px; font-size: 7.5px; color: rgb(34, 34, 34); --w: 17; transform: scaleX(0.9477);">None</span>
<span class="t" style="left:237px;top:344px;font-size:6px;color:#333">⇕</span>
<div class="btnw" style="left:248px;top:343px;width:33px;height:9px;border-color:#c4c4c4;border-radius:3px"></div>
<span class="t" style="left: 254px; top: 344px; font-size: 7.5px; color: rgb(154, 154, 154); --w: 20; transform: scaleX(0.9222);">Export</span>
<div class="a" style="left:446.0px;top:339px;width:14.5px;height:14px;background:#a4a4a4;border:1px solid #808080"></div>
<div class="a" style="left:448.5px;top:341.5px;width:9.5px;height:9px;background:#fafafa;border:1px solid #555"></div>
<div class="a" style="left:449.5px;top:342.5px;width:7.5px;height:2.5px;background:#5a5a5a"></div>
<div class="a" style="left:449.0px;top:345.5px;width:8.5px;height:1px;background:#555"></div>
<div class="a" style="left:453.0px;top:346px;width:1px;height:4.5px;background:#555"></div>
<div class="a" style="left:460.7px;top:339px;width:14.5px;height:14px;background:#8c8c8c;border:1px solid #808080"></div>
<div class="a" style="left:463.2px;top:341.5px;width:9.5px;height:9px;background:#fafafa;border:1px solid #555"></div>
<div class="a" style="left:464.2px;top:342.5px;width:7.5px;height:2.5px;background:#5a5a5a"></div>
<div class="a" style="left:463.7px;top:345.5px;width:8.5px;height:1px;background:#555"></div>
<div class="a" style="left:467.7px;top:346px;width:1px;height:4.5px;background:#555"></div>
<div class="a" style="left:475.4px;top:339px;width:14.5px;height:14px;background:#a4a4a4;border:1px solid #808080"></div>
<div class="a" style="left:477.9px;top:341.5px;width:9.5px;height:9px;background:#fafafa;border:1px solid #555"></div>
<div class="a" style="left:478.9px;top:342.5px;width:7.5px;height:2.5px;background:#fafafa"></div>
<div class="a" style="left:478.4px;top:345.5px;width:8.5px;height:1px;background:#555"></div>
<div class="a" style="left:482.4px;top:346px;width:1px;height:4.5px;background:#555"></div>
<div class="a" style="left:97px;top:358px;width:394px;height:121px;background:#fff;border-left:1px solid #b0b0b0;border-top:1px solid #b8b8b8"></div>
<div class="a" style="left:98px;top:359px;width:386px;height:7px;background:linear-gradient(#fff,#eee);border-bottom:1px solid #c4c4c4"></div>
<div class="a" style="left:100px;top:360px;width:1px;height:5px;background:#d0d0d0"></div>
<div class="a" style="left:109.5px;top:360px;width:1px;height:5px;background:#d0d0d0"></div>
<div class="a" style="left:239px;top:360px;width:1px;height:5px;background:#d0d0d0"></div>
<div class="a" style="left:336px;top:360px;width:1px;height:5px;background:#d0d0d0"></div>
<div class="a" style="left:474.5px;top:360px;width:1px;height:5px;background:#d0d0d0"></div>
<span class="t b" style="left: 136px; top: 358.8px; font-size: 7px; color: rgb(34, 34, 34); --w: 17; transform: scaleX(0.8911);">Name</span>
<span class="t b" style="left: 247px; top: 358.8px; font-size: 7px; color: rgb(34, 34, 34); --w: 44; transform: scaleX(0.8376);">Date Processed</span>
<span class="t b" style="left: 357px; top: 358.8px; font-size: 7px; color: rgb(34, 34, 34); --w: 37; transform: scaleX(0.9146);">Original File</span>
<span class="t b" style="left: 483px; top: 358.8px; font-size: 7px; color: rgb(34, 34, 34); --w: 9; transform: scaleX(0.8889);">Ori</span>
<div class="a" style="left:98px;top:366.5px;width:386px;height:9.5px;background:#3d66d4"></div>
<div class="gc" style="left:99.5px;top:367.5px;width:7.5px;height:7.5px"></div>
<div class="a" style="left:112.5px;top:369.5px;width:3px;height:3px;border-radius:50%;background:#8a9ac8"></div>
<svg class="a" style="left:123.5px;top:367px" width="8" height="9" viewBox="0 0 8 9"><path d="M0.5 0.5 H5 L7.5 3 V8.5 H0.5 Z" fill="#fbfbfb" stroke="#a8a8a8" stroke-width=".6"></path><path d="M5 0.5 V3 H7.5" fill="#e0e0e0" stroke="#a8a8a8" stroke-width=".5"></path><rect x="2" y="4" width="3.5" height="3" fill="#9a9490"></rect></svg>
<span class="t b" style="left: 136px; top: 367.5px; font-size: 7.5px; color: rgb(255, 255, 255); --w: 56; transform: scaleX(0.8425);">~Softpedia test.(N)</span>
<span class="t b" style="left: 247px; top: 367.5px; font-size: 7.5px; color: rgb(255, 255, 255); --w: 66; transform: scaleX(0.8509);">Dec 21, 2012, 5:56 PM</span>
<svg class="a" style="left:344.5px;top:367px" width="8" height="9" viewBox="0 0 8 9"><path d="M0.5 0.5 H5 L7.5 3 V8.5 H0.5 Z" fill="#fbfbfb" stroke="#a8a8a8" stroke-width=".6"></path><path d="M5 0.5 V3 H7.5" fill="#e0e0e0" stroke="#a8a8a8" stroke-width=".5"></path><rect x="2" y="4" width="3.5" height="3" fill="#9a9490"></rect></svg>
<span class="t b" style="left: 357px; top: 367.5px; font-size: 7.5px; color: rgb(255, 255, 255); --w: 109; transform: scaleX(0.8464);">/Users/Softpedia...Softpedia test.pdf</span>
<div class="gc" style="left:99.5px;top:377.5px;width:7.5px;height:7.5px"></div>
<div class="a" style="left:112.5px;top:380px;width:0;height:0;border-top:4px solid #555;border-left:2.5px solid transparent;border-right:2.5px solid transparent"></div>
<svg class="a" style="left:123.5px;top:377.5px" width="8" height="9" viewBox="0 0 8 9"><path d="M0.5 0.5 H5 L7.5 3 V8.5 H0.5 Z" fill="#fbfbfb" stroke="#a8a8a8" stroke-width=".6"></path><path d="M5 0.5 V3 H7.5" fill="#e0e0e0" stroke="#a8a8a8" stroke-width=".5"></path><rect x="2" y="4" width="3.5" height="3" fill="#9a9490"></rect></svg>
<span class="t b" style="left: 136px; top: 378px; font-size: 7.5px; color: rgb(17, 17, 17); --w: 20; transform: scaleX(0.7499);">PDF.(N)</span>
<span class="t b" style="left: 247px; top: 378px; font-size: 7.5px; color: rgb(17, 17, 17); --w: 71.5; transform: scaleX(0.8778);">Dec 22, 2012, 11:07 AM</span>
<svg class="a" style="left:344.5px;top:377px" width="12" height="10" viewBox="0 0 12 10"><path d="M0.5 1.5 H4.5 L5.5 2.5 H11.5 V9 H0.5 Z" fill="#9cb8d8" stroke="#7a98c0" stroke-width=".5"></path><rect x="0.5" y="3.5" width="11" height="5.5" fill="#b4cce6"></rect></svg>
<span class="t b" style="left: 357px; top: 378px; font-size: 7.5px; color: rgb(17, 17, 17); --w: 90; transform: scaleX(0.8337);">/Users/Softpedia/Desktop/PDF</span>
<div class="a" style="left:115px;top:385px;width:1px;height:94px;background:#7a7a7a"></div>
<div class="a" style="left:115px;top:391.3px;width:16px;height:1px;background:#7a7a7a"></div>
<span class="t" style="left: 135.5px; top: 389.6px; font-size: 6.7px; color: rgb(51, 51, 51); -webkit-text-stroke: 0.1px rgb(51, 51, 51); --w: 268.3; transform: scaleX(0.9014);">Sheet 1 Front:  Page Size = 1.129 cm x 1.129 cm,  Plates = 4,  Spots Colors = 0,  Total Ink = 144.706%</span>
<div class="a" style="left:115px;top:401.5px;width:16px;height:1px;background:#7a7a7a"></div>
<span class="t" style="left: 135.5px; top: 399.8px; font-size: 6.7px; color: rgb(51, 51, 51); -webkit-text-stroke: 0.1px rgb(51, 51, 51); --w: 264.8; transform: scaleX(0.9009);">Sheet 2 Front:  Page Size = 1.552 cm x 1.552 cm,  Plates = 4,  Spots Colors = 0,  Total Ink = 210.98%</span>
<div class="a" style="left:115px;top:411.7px;width:16px;height:1px;background:#7a7a7a"></div>
<span class="t" style="left: 135.5px; top: 410px; font-size: 6.7px; color: rgb(51, 51, 51); -webkit-text-stroke: 0.1px rgb(51, 51, 51); --w: 264.8; transform: scaleX(0.9009);">Sheet 3 Front:  Page Size = 1.552 cm x 1.552 cm,  Plates = 4,  Spots Colors = 0,  Total Ink = 210.98%</span>
<div class="a" style="left:115px;top:421.90000000000003px;width:16px;height:1px;background:#7a7a7a"></div>
<span class="t" style="left: 135.5px; top: 420.2px; font-size: 6.7px; color: rgb(51, 51, 51); -webkit-text-stroke: 0.1px rgb(51, 51, 51); --w: 271.0; transform: scaleX(0.9007);">Sheet 4 Front:  Page Size = 17.11 cm x 26.741 cm,  Plates = 4,  Spots Colors = 0,  Total Ink = 127.059%</span>
<div class="a" style="left:115px;top:432.1px;width:16px;height:1px;background:#7a7a7a"></div>
<span class="t" style="left: 135.5px; top: 430.4px; font-size: 6.7px; color: rgb(51, 51, 51); -webkit-text-stroke: 0.1px rgb(51, 51, 51); --w: 271.0; transform: scaleX(0.8992);">Sheet 5 Front:  Page Size = 20.99 cm x 22.825 cm,  Plates = 4,  Spots Colors = 0,  Total Ink = 281.961%</span>
<div class="a" style="left:115px;top:442.3px;width:16px;height:1px;background:#7a7a7a"></div>
<span class="t" style="left: 135.5px; top: 440.6px; font-size: 6.7px; color: rgb(51, 51, 51); -webkit-text-stroke: 0.1px rgb(51, 51, 51); --w: 273.5; transform: scaleX(0.8987);">Sheet 5 Back:  Page Size = 20.814 cm x 25.929 cm,  Plates = 4,  Spots Colors = 0,  Total Ink = 261.961%</span>
<div class="a" style="left:115px;top:452.5px;width:16px;height:1px;background:#7a7a7a"></div>
<span class="t" style="left: 135.5px; top: 450.8px; font-size: 6.7px; color: rgb(51, 51, 51); -webkit-text-stroke: 0.1px rgb(51, 51, 51); --w: 271.0; transform: scaleX(0.8992);">Sheet 6 Front:  Page Size = 20.99 cm x 22.825 cm,  Plates = 4,  Spots Colors = 0,  Total Ink = 281.961%</span>
<div class="a" style="left:115px;top:462.7px;width:16px;height:1px;background:#7a7a7a"></div>
<span class="t" style="left: 135.5px; top: 461px; font-size: 6.7px; color: rgb(51, 51, 51); -webkit-text-stroke: 0.1px rgb(51, 51, 51); --w: 273.5; transform: scaleX(0.8987);">Sheet 6 Back:  Page Size = 20.814 cm x 25.929 cm,  Plates = 4,  Spots Colors = 0,  Total Ink = 261.961%</span>
<div class="a" style="left:115px;top:472.9px;width:16px;height:1px;background:#7a7a7a"></div>
<span class="t" style="left: 135.5px; top: 471.2px; font-size: 6.7px; color: rgb(51, 51, 51); -webkit-text-stroke: 0.1px rgb(51, 51, 51); --w: 268.5; transform: scaleX(0.902);">Sheet 7 Front:  Page Size = 20.99 cm x 24.977 cm,  Plates = 4,  Spots Colors = 0,  Total Ink = 285.49%</span>
<div class="a" style="left:484px;top:366px;width:7px;height:113px;background:#f0f0f0;border-left:1px solid #ddd"></div>
<div class="a" style="left:486px;top:368px;width:3.5px;height:73px;border-radius:2px;background:#b4b4b4"></div>
<div class="a" style="left:97px;top:478.5px;width:396px;height:7.5px;background:linear-gradient(#e0e0e0,#d0d0d0);border-top:1px solid #a8a8a8"></div>
<div class="a" style="left:285px;top:479.5px;width:199px;height:6.5px;background:#f0f0f0"></div>
<div class="a" style="left:289px;top:480.5px;width:158px;height:4px;border-radius:2px;background:#b4b4b4"></div>
<svg class="a" style="left:99.5px;top:479.5px" width="7" height="7" viewBox="0 0 7 7"><path d="M0.5 1.2 H6.5 M2.5 1 V0.4 H4.5 V1 M1.2 1.5 L1.7 6.5 H5.3 L5.8 1.5" fill="none" stroke="#333" stroke-width=".9"></path></svg>
<span class="t" style="left:109px;top:479.5px;font-size:6px;color:#333">⇅</span>
<span class="t b" style="left: 127px; top: 479.5px; font-size: 6.5px; color: rgb(34, 34, 34); --w: 150; transform: scaleX(0.7508);">Processed Jobs: 2 — Selected: 1 — 53.9 MB (195.4 GB available)</span>
<div class="a" style="left:491.5px;top:337px;width:4.5px;height:149px;background:linear-gradient(90deg,#d4d4d4,#b0b0b0)"></div>
<div class="a" style="left:496px;top:357px;width:97px;height:122px;background:#f1f1f1;border-top:1px solid #c4c4c4"></div>
<div class="a" style="left:586px;top:358px;width:7px;height:121px;background:#fafafa;border-left:1px solid #e0e0e0"></div>
<span class="t" style="left: 503px; top: 406px; font-size: 13px; color: rgb(160, 160, 160); -webkit-text-stroke: 0px; --w: 74.5; letter-spacing: 0.533px;">No H...lders</span>
<span class="t" style="left: 501px; top: 424px; font-size: 8px; color: rgb(164, 164, 164); -webkit-text-stroke: 0px; --w: 78.5; transform: scaleX(0.8613);">(Use Produ...Hot Folders)</span>
<div class="a" style="left:496px;top:478.5px;width:97px;height:7.5px;background:linear-gradient(#e0e0e0,#d0d0d0);border-top:1px solid #a8a8a8"></div>
<svg class="a" style="left:499.5px;top:479.5px" width="7" height="7" viewBox="0 0 7 7"><path d="M0.5 1.2 H6.5 M2.5 1 V0.4 H4.5 V1 M1.2 1.5 L1.7 6.5 H5.3 L5.8 1.5" fill="none" stroke="#444" stroke-width=".9"></path></svg>
<span class="t" style="left:507px;top:479.5px;font-size:6px;color:#333">⇅</span>
<span class="t b" style="left: 517px; top: 479.5px; font-size: 6.5px; color: rgb(17, 17, 17); --w: 30; transform: scaleX(0.6864);">Hot Folders: 0</span>
<svg class="a" style="left:497px;top:338px" width="96" height="18" viewBox="0 0 96 18"><circle cx="11.5" cy="11" r="6" fill="#aebcc4"></circle><circle cx="8.5" cy="9" r="6" fill="#a4d494" stroke="#78b068" stroke-width=".6"></circle><path d="M7 6.5 l4 2.5 l-4 2.5z" fill="#3a8a30"></path><circle cx="33.5" cy="11" r="6" fill="#aebcc4"></circle><circle cx="30.5" cy="9" r="6" fill="#a4d494" stroke="#78b068" stroke-width=".6"></circle><rect x="28.3" y="6.5" width="1.4" height="5" fill="#3a8a30"></rect><rect x="31.3" y="6.5" width="1.4" height="5" fill="#3a8a30"></rect><rect x="55" y="1.5" width="7" height="9" rx="1" fill="#a8c0d8" stroke="#5a7aa0" stroke-width=".7"></rect><rect x="60" y="6" width="7" height="9" rx="1" fill="#b8c8d8" stroke="#5a7aa0" stroke-width=".7"></rect><rect x="63" y="9" width="7" height="7" rx="1" fill="#8aa0b8" stroke="#5a7aa0" stroke-width=".7"></rect><path d="M80 1 h8 l3 3 v13 h-11z" fill="#fbfbfb" stroke="#8a8a8a" stroke-width=".7"></path><rect x="82" y="6" width="7" height="1" fill="#444"></rect><rect x="82" y="8.5" width="7" height="1" fill="#444"></rect><rect x="82" y="11" width="7" height="1" fill="#444"></rect><rect x="82" y="14" width="7" height="1.5" fill="#bbb"></rect></svg>

<!-- ============ MENU BAR ============ -->
<div class="a" id="menubar"></div>
<svg class="a" style="left:10.5px;top:1px" width="9" height="10" viewBox="0 0 9 10"><path d="M6.2 0.3 C5.3 0.4 4.6 1.1 4.7 2.1 C5.6 2.1 6.3 1.3 6.2 0.3Z M4.5 2.5 C3.7 2.5 3.3 2.1 2.5 2.2 C1.2 2.3 0.2 3.5 0.3 5.1 C0.4 7.3 1.8 9.7 2.9 9.6 C3.6 9.6 3.8 9.2 4.5 9.2 C5.2 9.2 5.4 9.6 6.1 9.6 C7 9.5 7.7 8.3 8.3 7.1 C7.3 6.6 6.9 5.4 7.2 4.4 C7.4 3.8 7.8 3.4 8.2 3.1 C7.6 2.4 6.9 2.2 6.3 2.2 C5.5 2.2 5.2 2.5 4.5 2.5Z" fill="#111"></path></svg>
<span class="t b" style="left: 29.5px; top: 2px; font-size: 8.5px; color: rgb(17, 17, 17); --w: 50.5; transform: scaleX(0.9056);">PressPerCent</span>
<span class="t m" style="left: 90.5px; top: 2px; font-size: 8.5px; color: rgb(17, 17, 17); --w: 12.0; transform: scaleX(0.8757);">File</span>
<span class="t m" style="left: 113px; top: 2px; font-size: 8.5px; color: rgb(17, 17, 17); --w: 12.0; transform: scaleX(0.8188);">Edit</span>
<span class="t m" style="left: 137px; top: 2px; font-size: 8.5px; color: rgb(17, 17, 17); --w: 16.7; transform: scaleX(0.9135);">View</span>
<span class="t m" style="left: 212.7px; top: 2px; font-size: 8.5px; color: rgb(17, 17, 17); --w: 28.0; transform: scaleX(0.9261);">Window</span>
<span class="t m" style="left: 250.8px; top: 2px; font-size: 8.5px; color: rgb(17, 17, 17); --w: 16.2; transform: scaleX(0.9265);">Help</span>
<div class="a" style="left:160.5px;top:0;width:47.5px;height:11px;background:linear-gradient(#6a7cf0,#3048d8)"></div>
<span class="t m" style="left: 164.5px; top: 2px; font-size: 8.5px; color: rgb(255, 255, 255); --w: 40; transform: scaleX(0.9842);">Production</span>
<svg class="a" style="left:505px;top:1.5px" width="10" height="9" viewBox="0 0 10 9"><circle cx="5" cy="4.5" r="4.2" fill="#7ab0d8"></circle><path d="M2 2.5 q2 1 2.5 3 q1 -2 3 -2.5 M3 7 q2 -1 4 0.5" fill="none" stroke="#3a8a48" stroke-width="1.4"></path></svg>
<div class="a" style="left:523px;top:2px;width:6px;height:8px;border:1px solid #555;border-radius:1px;background:linear-gradient(#ddd,#999)"></div>
<div class="a" style="left:535px;top:3px;width:10px;height:6.5px;background:#0a0a0a"></div>
<span class="t" style="left: 550.5px; top: 2px; font-size: 8.5px; color: rgb(17, 17, 17); --w: 46; transform: scaleX(0.9361);">928 MB Free</span>
<div class="a" style="left:157.5px;top:11px;width:142.5px;height:41px;background:rgba(252,252,252,.97);box-shadow:0 1px 3px rgba(0,0,0,.45)"></div>
<span class="t" style="left: 170px; top: 14.4px; font-size: 8.5px; color: rgb(156, 156, 156); --w: 60.5; transform: scaleX(0.9416);">Start Hot Folders</span>
<span class="t" style="left: 170px; top: 24.4px; font-size: 8.5px; color: rgb(156, 156, 156); --w: 64.5; transform: scaleX(0.9161);">Pause Hot Folders</span>
<div class="a" style="left:157.5px;top:41px;width:142.5px;height:9.5px;background:linear-gradient(#6478f0,#2a40d8)"></div>
<span class="t m" style="left: 170px; top: 41.1px; font-size: 8.5px; color: rgb(255, 255, 255); --w: 91; transform: scaleX(0.9487);">Production Preferences...</span>
<span class="t m" style="left: 271px; top: 41.1px; font-size: 8.5px; color: rgb(255, 255, 255); --w: 19; transform: scaleX(0.8889);">⌥⌘,</span>
<svg class="a" style="left:0;top:0" width="210" height="70" viewBox="0 0 210 70">
<ellipse cx="36" cy="40" rx="34" ry="24" fill="#fff" opacity=".5"></ellipse>
<g opacity="0.85">
<path d="M7 47 C3 29 15 13 33 11.5 C46 10.5 55 17 58.5 27 L52.5 28.5 C48.5 22 42 19.5 34 20 C22 21 13.5 32 12.5 48 Z" fill="#439ee3"></path>
<path d="M12 35 C14 29 20 26.5 28 26.5 L36.5 26.5 L36.5 48 L17 48 C13 48 11.5 45 11.5 41 Z" fill="#439ee3"></path>
<path d="M12.5 49 C13 34 22 22 40 19.8" fill="none" stroke="#f4f4f4" stroke-width="1.3"></path>
<path d="M19 37 L26 30 L30 30 L30 46 L21 46 L21 41 Z" fill="#f2f2f2"></path>
<path d="M39 25 L45.5 25 L45.5 47 L39 47 Z" fill="#439ee3"></path>
<path d="M45 22.5 C54 22.5 58.5 28.5 58.5 34 C58.5 41 53.5 46 45 46 L45 41 C50 41 52.5 38 52.5 34 C52.5 30 50 28 45 28 Z" fill="#439ee3"></path>
<path d="M23 21.5 l0.9 1.8 2 .2 -1.5 1.3 .5 2 -1.9 -1 -1.9 1 .5 -2 -1.5 -1.3 2 -.2z" fill="#fff"></path>
<path d="M9 50 C13 56 19 60 27 62" fill="none" stroke="#f0a030" stroke-width="4"></path><path d="M62 35 C60 50 50 60 35 65 L31 57 C44 53 53 46 57 35 Z" fill="#f0a030"></path>
<path d="M29 52 L38 52 L38 65 L29 65 Z" fill="#f0a030"></path>
</g>
</svg>
<svg class="a" style="left:0;top:0;mix-blend-mode:multiply" width="210" height="70" viewBox="0 0 210 70">
<g fill="none" stroke="#4eaaf6" stroke-width="4.2" stroke-linecap="butt">
<!-- 河 x0=67 -->
<g transform="translate(67,15.3) scale(1,1.07)">
<path d="M3 3 l3 2 M2 10 l3 2 M2 24 l4 -8"></path>
<path d="M9 3.5 h16 M21.5 3.5 v19 l-3 -1.5"></path>
<path d="M10.5 9.5 h7 v8 h-7 z"></path>
</g>
<!-- 东 x0=94 -->
<g transform="translate(94,15.3) scale(1,1.07)">
<path d="M3 5 h21 M12 1 l-6 12 h17 M14.5 8 v17 l-3 -1.5 M8 18 l-4 5 M20 18 l4 5"></path>
</g>
<!-- 软 x0=121 -->
<g transform="translate(121,15.3) scale(1,1.07)">
<path d="M1 5.5 h10 M6 1.5 l-3 11 h9 M7 8.5 v17 M1 19 h11"></path>
<path d="M16 1 l-2 7 M15 5.5 h10 l-2 4 M19.5 9 l-6 16 M19.5 14 l6 11"></path>
</g>
<!-- 件 x0=148 -->
<g transform="translate(148,15.3) scale(1,1.07)">
<path d="M7 1 l-5 10 M5 8 v17"></path>
<path d="M12 2 l-2 7 M10 8 h14 M9 16 h16 M17 1 v24"></path>
</g>
<!-- 园 x0=175 -->
<g transform="translate(175,15.3) scale(1,1.07)">
<path d="M2 2 h22 v23 h-22 z"></path>
<path d="M8 7.5 h10 M6 12.5 h14 M11 12.5 l-3 8 M15 12.5 v7 h5"></path>
</g>
</g>
</svg>
<span class="t b" style="left:68.5px;top:50px;font-size:16.5px;font-family:'Liberation Serif',serif;color:#62ae4e;opacity:.95;transform:scaleX(1.21)">www.pc0359.cn</span>



</body></html>
